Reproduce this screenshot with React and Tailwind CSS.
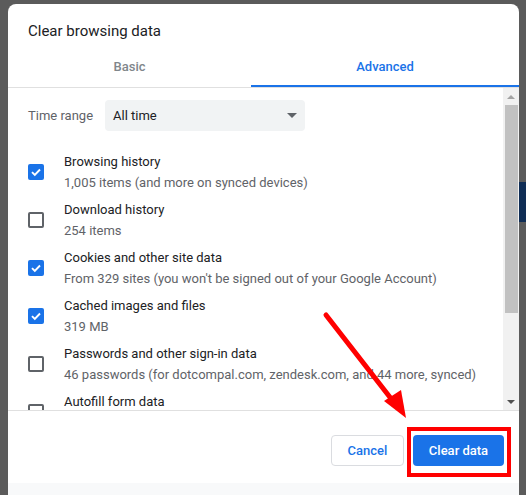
import React from 'react';

const items = [
    { title: 'Browsing history', sub: '1,005 items (and more on synced devices)', checked: true },
    { title: 'Download history', sub: '254 items', checked: false },
    { title: 'Cookies and other site data', sub: "From 329 sites (you won't be signed out of your Google Account)", checked: true },
    { title: 'Cached images and files', sub: '319 MB', checked: true },
    { title: 'Passwords and other sign-in data', sub: '46 passwords (for dotcompal.com, zendesk.com, and 44 more, synced)', checked: false },
    { title: 'Autofill form data', sub: '', checked: false },
];

function Checkbox({ checked }) {
    if (checked) {
        return (
            <div className="w-[16px] h-[16px] rounded-[2px] bg-[#1a73e8] flex items-center justify-center shrink-0">
                <svg width="12" height="12" viewBox="0 0 12 12">
                    <path d="M2 6.2 L4.8 9 L10 3.5" fill="none" stroke="white" strokeWidth="1.9" />
                </svg>
            </div>
        );
    }
    return <div className="w-[16px] h-[16px] rounded-[2px] border-2 border-[#5f6368] shrink-0" />;
}

export default function App() {
    return (
        <div className="relative w-[526px] h-[495px] overflow-hidden bg-[#5b5b5b] pt-[4px] pl-[8px] font-['Roboto',sans-serif]">
            {/* Seite dahinter, nur als Streifen sichtbar */}
            <div className="absolute right-0 top-[182px] w-[7px] h-[40px] bg-[#0f2d55]" />

            <div className="w-[511px] h-[491px] bg-white rounded-t-[8px] flex flex-col">
                <div className="h-[42px] pt-[17px] pl-[20px] text-[15px] leading-[20px] text-[#202124]">
                    Clear browsing data
                </div>

                {/* Tabs */}
                <div className="h-[42px] flex border-b border-[#e0e0e0] text-[13px] font-medium">
                    <div className="w-[243px] flex items-center justify-center text-[#80868b]">Basic</div>
                    <div className="relative flex-1 flex items-center justify-center text-[#1a73e8]">
                        Advanced
                        <div className="absolute left-0 right-0 bottom-0 h-[2px] bg-[#1a73e8]" />
                    </div>
                </div>

                {/* Liste */}
                <div className="h-[322px] flex">
                    <div className="flex-1 overflow-hidden pl-[20px] pt-[12px]">
                        <div className="flex items-center h-[31px]">
                            <div className="w-[77px] text-[13px] text-[#5f6368]">Time range</div>
                            <div className="w-[200px] h-[31px] bg-[#f1f3f4] rounded-[4px] flex items-center justify-between pl-[8px] pr-[8px]">
                                <span className="text-[13px] text-[#202124]">All time</span>
                                <svg width="10" height="5" viewBox="0 0 10 5">
                                    <path d="M0 0 L10 0 L5 5 Z" fill="#5f6368" />
                                </svg>
                            </div>
                        </div>
                        <div className="mt-[17px] flex flex-col">
                            {items.map((it) => (
                                <div key={it.title} className="h-[48px] flex items-center shrink-0">
                                    <Checkbox checked={it.checked} />
                                    <div className="ml-[20px] text-[13px] leading-[21px]">
                                        <div className="text-[#202124]">{it.title}</div>
                                        <div className="h-[21px] text-[#5f6368] whitespace-nowrap">{it.sub}</div>
                                    </div>
                                </div>
                            ))}
                        </div>
                    </div>

                    {/* Scrollbar */}
                    <div className="w-[16px] bg-[#f1f1f1] flex flex-col items-center">
                        <div className="h-[17px] flex items-center justify-center">
                            <svg width="8" height="4" viewBox="0 0 8 4"><path d="M0 4 L8 4 L4 0 Z" fill="#a3a3a3" /></svg>
                        </div>
                        <div className="w-[13px] h-[208px] bg-[#c1c1c1]" />
                        <div className="flex-1" />
                        <div className="h-[17px] flex items-center justify-center">
                            <svg width="8" height="4" viewBox="0 0 8 4"><path d="M0 0 L8 0 L4 4 Z" fill="#505050" /></svg>
                        </div>
                    </div>
                </div>

                {/* Footer */}
                <div className="h-[73px] border-t border-[#e0e0e0] flex justify-end items-start pt-[24px] pr-[15px] gap-[9px]">
                    <button className="w-[73px] h-[31px] rounded-[4px] border border-[#dadce0] bg-white text-[13px] font-medium text-[#1a73e8]">
                        Cancel
                    </button>
                    <div className="relative">
                        <button className="w-[91px] h-[31px] rounded-[4px] bg-[#1a73e8] text-[13px] font-medium text-white">
                            Clear data
                        </button>
                        <div className="absolute -left-[6px] -right-[7px] -top-[8px] -bottom-[11px] border-[4px] border-[#ff0000]" />
                    </div>
                </div>
                <div className="flex-1 bg-[#f8f9fa]" />
            </div>

            {/* roter Pfeil */}
            <svg className="absolute left-0 top-0" width="526" height="495" viewBox="0 0 526 495">
                <line x1="326" y1="315" x2="396" y2="405" stroke="#ff0000" strokeWidth="5" strokeLinecap="round" />
                <path d="M406 418 L384 401 L401 390 Z" fill="#ff0000" />
            </svg>
        </div>
    );
}
